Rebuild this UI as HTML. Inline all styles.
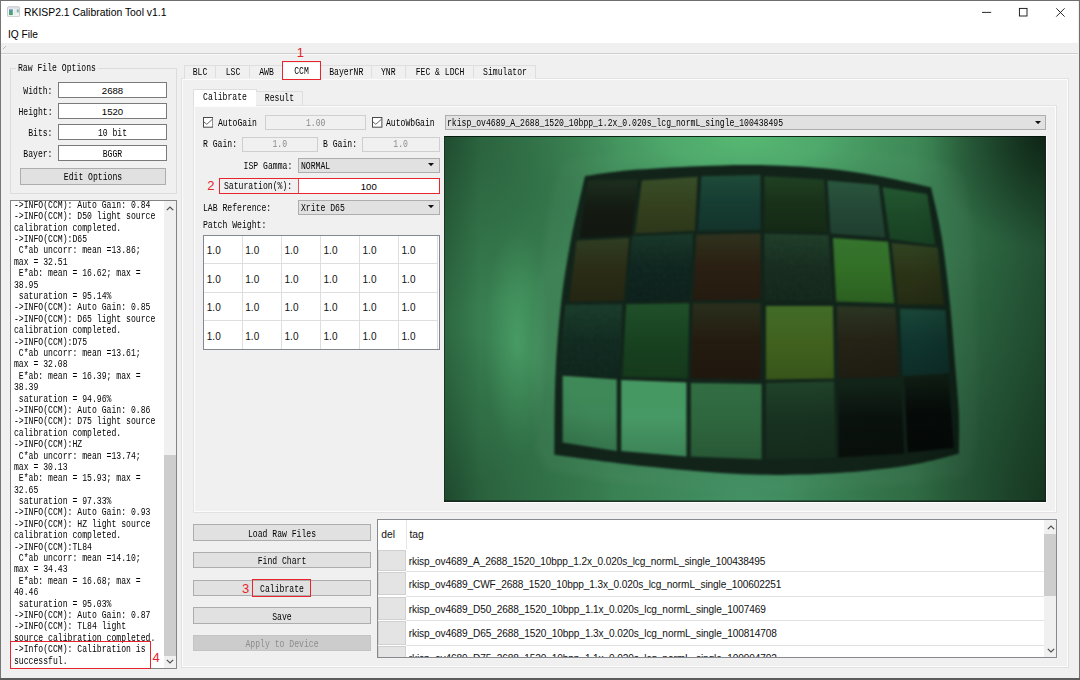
<!DOCTYPE html>
<html lang="en"><head><meta charset="utf-8"><title>RKISP2.1 Calibration Tool v1.1</title>
<style>
*{box-sizing:border-box;margin:0;padding:0}
html,body{width:1080px;height:680px;overflow:hidden}
body{position:relative;background:#f0f0f0;font-family:"Liberation Sans",sans-serif;color:#000;font-size:10px}
.a{position:absolute}
.m{font-family:"Liberation Mono","DejaVu Sans Mono",monospace;font-size:10.5px;line-height:12px;white-space:pre;display:block;transform:scaleX(.773);transform-origin:0 50%;color:#000;position:relative;top:1px}
.mc{transform-origin:50% 50%;text-align:center;left:0;right:0}
.mr{transform-origin:100% 50%;text-align:right}
.btn{background:#e1e1e1;border:1px solid #adadad}
.inp{background:#fff;border:1px solid #7a7a7a}
.dis{background:#f0f0f0;border:1px solid #cfcfcf}
.cmb{background:#e1e1e1;border:1px solid #adadad}
.s{font-family:"Liberation Sans",sans-serif;white-space:pre}
.red{border:1.9px solid #e8242c}
.rn{color:#e6232b;font-family:"Liberation Sans",sans-serif;font-size:13px;line-height:13px}
</style></head><body>
<!-- window frame strips -->
<div class="a" style="left:0;top:0;width:1080px;height:1px;background:#6e6e6e"></div>
<div class="a" style="left:0;top:0;width:1.2px;height:680px;background:#767676"></div>
<div class="a" style="left:1078.8px;top:0;width:1.2px;height:680px;background:#707070"></div>
<div class="a" style="left:0;top:678.3px;width:1080px;height:1.7px;background:#5c5c5c"></div>
<!-- title + menu -->
<div class="a" style="left:1.4px;top:1px;width:1077.1px;height:42.2px;background:#fff"></div>
<svg class="a" style="left:7px;top:6px" width="13" height="11.4" viewBox="0 0 13 11.4"><defs><linearGradient id="ig" x1="0" y1="0" x2=".6" y2="1"><stop offset="0" stop-color="#6a8fc4"/><stop offset="1" stop-color="#44a75c"/></linearGradient></defs><rect x=".5" y=".7" width="12" height="10" rx="1" fill="#f2f4f6" stroke="#c6cacf"/><rect x="1" y="1.2" width="11" height="1.3" fill="#d3d7dc"/><rect x="2" y="3.3" width="3.8" height="5.8" fill="url(#ig)"/><rect x="9.8" y="3.3" width="1.9" height="3.2" fill="url(#ig)" opacity=".75"/><rect x="7.3" y="3.3" width="1.2" height="5.8" fill="#e3e5e8"/></svg>
<div class="a s" id="ttl" style="left:24px;top:6.5px;font-size:10.4px;line-height:12px;letter-spacing:0">RKISP2.1 Calibration Tool v1.1</div>
<div class="a s" id="mnu" style="left:8px;top:29.2px;font-size:10.2px;line-height:12px">IQ File</div>
<svg class="a" style="left:975px;top:5px" width="96" height="16" viewBox="0 0 96 16"><g stroke="#111" stroke-width="0.9" fill="none"><path d="M7 7.4H16.2"/><rect x="44.4" y="3.4" width="7.6" height="7.6"/><path d="M81.3 3.3L89.6 11.6M89.6 3.3L81.3 11.6"/></g></svg>
<div class="a" style="left:1.4px;top:52.8px;width:1077px;height:1px;background:#cfcfcf"></div>
<div class="a" style="left:1.4px;top:53.8px;width:1077px;height:1px;background:#f8f8f8"></div>
<svg class="a" style="left:3px;top:46px" width="4" height="4" viewBox="0 0 4 4"><path d="M0 3L3 0" stroke="#aaa" stroke-width=".8"/></svg>

<!-- Raw File Options group -->
<div class="a" style="left:10px;top:68px;width:167px;height:126px;border:1px solid #dcdcdc"></div>
<div class="a" style="left:16px;top:61px;width:82px;height:13px;background:#f0f0f0"></div>
<div class="a" style="left:18px;top:60.8px;width:120px"><span class="m">Raw File Options</span></div>

<div class="a" style="left:0;top:84px;width:52.5px"><span class="m mr">Width:</span></div>
<div class="a inp" style="left:58px;top:82px;width:109px;height:16.4px"></div>
<div class="a s" style="left:58px;top:84.9px;width:109px;text-align:center;font-size:9.6px;line-height:12px">2688</div>

<div class="a" style="left:0;top:105px;width:52.5px"><span class="m mr">Height:</span></div>
<div class="a inp" style="left:58px;top:103px;width:109px;height:16.4px"></div>
<div class="a s" style="left:58px;top:105.9px;width:109px;text-align:center;font-size:9.6px;line-height:12px">1520</div>

<div class="a" style="left:0;top:126px;width:52.5px"><span class="m mr">Bits:</span></div>
<div class="a inp" style="left:58px;top:124px;width:109px;height:16.4px"></div>
<div class="a" style="left:58px;top:126.2px;width:109px"><span class="m mc">10 bit</span></div>

<div class="a" style="left:0;top:147px;width:52.5px"><span class="m mr">Bayer:</span></div>
<div class="a inp" style="left:58px;top:145px;width:109px;height:16.4px"></div>
<div class="a" style="left:58px;top:147.2px;width:109px"><span class="m mc">BGGR</span></div>

<div class="a btn" style="left:20px;top:168px;width:146px;height:16.6px"></div>
<div class="a" style="left:20px;top:170.3px;width:146px"><span class="m mc">Edit Options</span></div>

<!-- log box -->
<div class="a" id="log" style="left:10px;top:200.3px;width:167px;height:468.4px;background:#fff;border:1px solid #848484;overflow:hidden">
<div class="a" style="left:2.7px;top:-2.4px;width:200px;line-height:11.4px" id="loglines">
<span class="m" style="line-height:11.4px;height:11.4px">-&gt;INFO(CCM): Auto Gain: 0.84</span>
<span class="m" style="line-height:11.4px;height:11.4px">-&gt;INFO(CCM): D50 light source</span>
<span class="m" style="line-height:11.4px;height:11.4px">calibration completed.</span>
<span class="m" style="line-height:11.4px;height:11.4px">-&gt;INFO(CCM):D65</span>
<span class="m" style="line-height:11.4px;height:11.4px"> C*ab uncorr: mean =13.86;</span>
<span class="m" style="line-height:11.4px;height:11.4px">max = 32.51</span>
<span class="m" style="line-height:11.4px;height:11.4px"> E*ab: mean = 16.62; max =</span>
<span class="m" style="line-height:11.4px;height:11.4px">38.95</span>
<span class="m" style="line-height:11.4px;height:11.4px"> saturation = 95.14%</span>
<span class="m" style="line-height:11.4px;height:11.4px">-&gt;INFO(CCM): Auto Gain: 0.85</span>
<span class="m" style="line-height:11.4px;height:11.4px">-&gt;INFO(CCM): D65 light source</span>
<span class="m" style="line-height:11.4px;height:11.4px">calibration completed.</span>
<span class="m" style="line-height:11.4px;height:11.4px">-&gt;INFO(CCM):D75</span>
<span class="m" style="line-height:11.4px;height:11.4px"> C*ab uncorr: mean =13.61;</span>
<span class="m" style="line-height:11.4px;height:11.4px">max = 32.08</span>
<span class="m" style="line-height:11.4px;height:11.4px"> E*ab: mean = 16.39; max =</span>
<span class="m" style="line-height:11.4px;height:11.4px">38.39</span>
<span class="m" style="line-height:11.4px;height:11.4px"> saturation = 94.96%</span>
<span class="m" style="line-height:11.4px;height:11.4px">-&gt;INFO(CCM): Auto Gain: 0.86</span>
<span class="m" style="line-height:11.4px;height:11.4px">-&gt;INFO(CCM): D75 light source</span>
<span class="m" style="line-height:11.4px;height:11.4px">calibration completed.</span>
<span class="m" style="line-height:11.4px;height:11.4px">-&gt;INFO(CCM):HZ</span>
<span class="m" style="line-height:11.4px;height:11.4px"> C*ab uncorr: mean =13.74;</span>
<span class="m" style="line-height:11.4px;height:11.4px">max = 30.13</span>
<span class="m" style="line-height:11.4px;height:11.4px"> E*ab: mean = 15.93; max =</span>
<span class="m" style="line-height:11.4px;height:11.4px">32.65</span>
<span class="m" style="line-height:11.4px;height:11.4px"> saturation = 97.33%</span>
<span class="m" style="line-height:11.4px;height:11.4px">-&gt;INFO(CCM): Auto Gain: 0.93</span>
<span class="m" style="line-height:11.4px;height:11.4px">-&gt;INFO(CCM): HZ light source</span>
<span class="m" style="line-height:11.4px;height:11.4px">calibration completed.</span>
<span class="m" style="line-height:11.4px;height:11.4px">-&gt;INFO(CCM):TL84</span>
<span class="m" style="line-height:11.4px;height:11.4px"> C*ab uncorr: mean =14.10;</span>
<span class="m" style="line-height:11.4px;height:11.4px">max = 34.43</span>
<span class="m" style="line-height:11.4px;height:11.4px"> E*ab: mean = 16.68; max =</span>
<span class="m" style="line-height:11.4px;height:11.4px">40.46</span>
<span class="m" style="line-height:11.4px;height:11.4px"> saturation = 95.03%</span>
<span class="m" style="line-height:11.4px;height:11.4px">-&gt;INFO(CCM): Auto Gain: 0.87</span>
<span class="m" style="line-height:11.4px;height:11.4px">-&gt;INFO(CCM): TL84 light</span>
<span class="m" style="line-height:11.4px;height:11.4px">source calibration completed.</span>
<span class="m" style="line-height:11.4px;height:11.4px">-&gt;Info(CCM): Calibration is</span>
<span class="m" style="line-height:11.4px;height:11.4px">successful.</span>
</div>
<div class="a" style="left:153.2px;top:0;width:12px;height:466.4px;background:#f0f0f0"></div>
<div class="a" style="left:153.2px;top:254.2px;width:12px;height:200.5px;background:#cdcdcd"></div>
<svg class="a" style="left:155.2px;top:4.5px" width="8" height="5" viewBox="0 0 8 5"><path d="M.8 4.2L4 1L7.2 4.2" fill="none" stroke="#505050" stroke-width="1.2"/></svg>
<svg class="a" style="left:155.2px;top:458px" width="8" height="5" viewBox="0 0 8 5"><path d="M.8 .8L4 4L7.2 .8" fill="none" stroke="#505050" stroke-width="1.2"/></svg>
</div>
<div class="a red" style="left:10px;top:641px;width:141px;height:27.8px"></div>
<div class="a rn" style="left:152.5px;top:651px">4</div>
<!-- outer pane -->
<div class="a" style="left:181.4px;top:78.2px;width:887.4px;height:589.4px;border:1px solid #e2e2e2;box-shadow:inset 0 0 0 1px #fcfcfc;background:#f0f0f0"></div>
<!-- outer tabs -->
<div class="a" style="left:183.5px;top:65px;width:352px;height:13.5px;border:1px solid #dedede;border-bottom:none;background:#f0f0f0"></div>
<div class="a" style="left:215.3px;top:65px;width:1px;height:13px;background:#dedede"></div>
<div class="a" style="left:249.3px;top:65px;width:1px;height:13px;background:#dedede"></div>
<div class="a" style="left:370.8px;top:65px;width:1px;height:13px;background:#dedede"></div>
<div class="a" style="left:405.2px;top:65px;width:1px;height:13px;background:#dedede"></div>
<div class="a" style="left:473.4px;top:65px;width:1px;height:13px;background:#dedede"></div>
<div class="a" style="left:283px;top:62.5px;width:37px;height:17px;background:#fff"></div>
<div class="a" style="left:183.5px;top:64.9px;width:32px"><span class="m mc">BLC</span></div>
<div class="a" style="left:215.5px;top:64.9px;width:34px"><span class="m mc">LSC</span></div>
<div class="a" style="left:249.5px;top:64.9px;width:33px"><span class="m mc">AWB</span></div>
<div class="a" style="left:283px;top:64.2px;width:37px"><span class="m mc">CCM</span></div>
<div class="a" style="left:320.5px;top:64.9px;width:50.5px"><span class="m mc">BayerNR</span></div>
<div class="a" style="left:371px;top:64.9px;width:34.5px"><span class="m mc">YNR</span></div>
<div class="a" style="left:405.5px;top:64.9px;width:68px"><span class="m mc">FEC &amp; LDCH</span></div>
<div class="a" style="left:473.7px;top:64.9px;width:62px"><span class="m mc">Simulator</span></div>
<div class="a red" style="left:282.3px;top:60.8px;width:38.6px;height:19.6px"></div>
<div class="a rn" style="left:296.8px;top:45.5px">1</div>

<!-- inner pane -->
<div class="a" style="left:192.5px;top:104.6px;width:864.2px;height:408px;border:1px solid #e2e2e2;box-shadow:inset 0 0 0 1px #fcfcfc;background:#f0f0f0"></div>
<div class="a" style="left:192.5px;top:88.6px;width:64px;height:17px;border:1px solid #dedede;border-bottom:none;background:#fff"></div>
<div class="a" style="left:256px;top:90.5px;width:46.8px;height:14.5px;border:1px solid #dedede;border-left:none;border-bottom:none;background:#f0f0f0"></div>
<div class="a" style="left:192.5px;top:90.2px;width:64px"><span class="m mc">Calibrate</span></div>
<div class="a" style="left:256px;top:91.2px;width:46.8px"><span class="m mc">Result</span></div>

<!-- row 1: AutoGain -->
<svg class="a" style="left:202.7px;top:117.1px" width="10.4" height="10.7" viewBox="0 0 10.4 10.7"><rect x=".5" y=".5" width="9.4" height="9.7" fill="#fff" stroke="#4a4a4a"/><path d="M.9 4.9L3.8 7.3L9.6 2.1" fill="none" stroke="#5a5a5a" stroke-width=".95"/></svg>
<div class="a" style="left:217.5px;top:116px;width:60px"><span class="m">AutoGain</span></div>
<div class="a dis" style="left:265px;top:115.3px;width:101.4px;height:15px"></div>
<div class="a" style="left:265px;top:116px;width:101.4px"><span class="m mc" style="color:#8a8a8a">1.00</span></div>
<svg class="a" style="left:372.2px;top:117.1px" width="10.4" height="10.7" viewBox="0 0 10.4 10.7"><rect x=".5" y=".5" width="9.4" height="9.7" fill="#fff" stroke="#4a4a4a"/><path d="M.9 4.9L3.8 7.3L9.6 2.1" fill="none" stroke="#5a5a5a" stroke-width=".95"/></svg>
<div class="a" style="left:386.3px;top:116px;width:60px"><span class="m">AutoWbGain</span></div>
<div class="a cmb" style="left:444.5px;top:114.8px;width:601.7px;height:15.6px"></div>
<div class="a" style="left:447px;top:116px;width:500px"><span class="m">rkisp_ov4689_A_2688_1520_10bpp_1.2x_0.020s_lcg_normL_single_100438495</span></div>
<svg class="a" style="left:1034.5px;top:120.5px" width="6" height="3.2" viewBox="0 0 6 3.2"><path d="M0 0H6L3 3.2Z" fill="#111"/></svg>

<!-- row 2: R/B gain -->
<div class="a" style="left:202.5px;top:137.4px;width:60px"><span class="m">R Gain:</span></div>
<div class="a dis" style="left:242px;top:137px;width:75.6px;height:14.6px"></div>
<div class="a" style="left:242px;top:137.4px;width:75.6px"><span class="m mc" style="color:#8a8a8a">1.0</span></div>
<div class="a" style="left:323px;top:137.4px;width:60px"><span class="m">B Gain:</span></div>
<div class="a dis" style="left:362.4px;top:137px;width:77.2px;height:14.6px"></div>
<div class="a" style="left:362.4px;top:137.4px;width:77.2px"><span class="m mc" style="color:#8a8a8a">1.0</span></div>

<!-- row 3: ISP Gamma -->
<div class="a" style="left:192px;top:158.6px;width:100.3px"><span class="m mr">ISP Gamma:</span></div>
<div class="a cmb" style="left:298px;top:157.8px;width:141.6px;height:15px"></div>
<div class="a" style="left:300.5px;top:158.6px;width:100px"><span class="m">NORMAL</span></div>
<svg class="a" style="left:427.8px;top:163.3px" width="6" height="3.2" viewBox="0 0 6 3.2"><path d="M0 0H6L3 3.2Z" fill="#111"/></svg>

<!-- row 4: Saturation -->
<div class="a" style="left:298px;top:178.6px;width:141.6px;height:15px;background:#fff"></div>
<div class="a red" style="left:218.6px;top:177.6px;width:221.8px;height:16.8px"></div>
<div class="a" style="left:297.6px;top:178.5px;width:1.2px;height:15px;background:#e6232b;opacity:.8"></div>
<div class="a" style="left:224px;top:179.2px;width:80px"><span class="m">Saturation(%):</span></div>
<div class="a s" style="left:298px;top:180.9px;width:141.6px;text-align:center;font-size:9.6px;line-height:12px">100</div>
<div class="a rn" style="left:207.3px;top:179.4px">2</div>

<!-- row 5: LAB reference -->
<div class="a" style="left:202.5px;top:200.6px;width:100px"><span class="m">LAB Reference:</span></div>
<div class="a cmb" style="left:298px;top:199.6px;width:141.6px;height:15.4px"></div>
<div class="a" style="left:300.5px;top:200.6px;width:100px"><span class="m">Xrite D65</span></div>
<svg class="a" style="left:427.8px;top:205.3px" width="6" height="3.2" viewBox="0 0 6 3.2"><path d="M0 0H6L3 3.2Z" fill="#111"/></svg>
<div class="a" style="left:202.5px;top:218.3px;width:100px"><span class="m">Patch Weight:</span></div>

<!-- patch weight table -->
<div class="a" id="pw" style="left:202.5px;top:235px;width:237.2px;height:114.6px;background:#fff;border:1px solid #828790"></div>
<div class="a" style="left:241.50px;top:236px;width:1px;height:112.6px;background:#dedede"></div>
<div class="a" style="left:280.75px;top:236px;width:1px;height:112.6px;background:#dedede"></div>
<div class="a" style="left:319.75px;top:236px;width:1px;height:112.6px;background:#dedede"></div>
<div class="a" style="left:358.75px;top:236px;width:1px;height:112.6px;background:#dedede"></div>
<div class="a" style="left:397.75px;top:236px;width:1px;height:112.6px;background:#dedede"></div>
<div class="a" style="left:437.00px;top:236px;width:1px;height:112.6px;background:#dedede"></div>
<div class="a" style="left:203.5px;top:263.25px;width:234.5px;height:1px;background:#dedede"></div>
<div class="a" style="left:203.5px;top:291.75px;width:234.5px;height:1px;background:#dedede"></div>
<div class="a" style="left:203.5px;top:320.25px;width:234.5px;height:1px;background:#dedede"></div>
<div class="a s" style="left:206.80px;top:245.40px;font-size:10px;line-height:12px;color:#111">1.0</div>
<div class="a s" style="left:245.30px;top:245.40px;font-size:10px;line-height:12px;color:#111">1.0</div>
<div class="a s" style="left:284.55px;top:245.40px;font-size:10px;line-height:12px;color:#111">1.0</div>
<div class="a s" style="left:323.55px;top:245.40px;font-size:10px;line-height:12px;color:#111">1.0</div>
<div class="a s" style="left:362.55px;top:245.40px;font-size:10px;line-height:12px;color:#111">1.0</div>
<div class="a s" style="left:401.55px;top:245.40px;font-size:10px;line-height:12px;color:#111">1.0</div>
<div class="a s" style="left:206.80px;top:273.65px;font-size:10px;line-height:12px;color:#111">1.0</div>
<div class="a s" style="left:245.30px;top:273.65px;font-size:10px;line-height:12px;color:#111">1.0</div>
<div class="a s" style="left:284.55px;top:273.65px;font-size:10px;line-height:12px;color:#111">1.0</div>
<div class="a s" style="left:323.55px;top:273.65px;font-size:10px;line-height:12px;color:#111">1.0</div>
<div class="a s" style="left:362.55px;top:273.65px;font-size:10px;line-height:12px;color:#111">1.0</div>
<div class="a s" style="left:401.55px;top:273.65px;font-size:10px;line-height:12px;color:#111">1.0</div>
<div class="a s" style="left:206.80px;top:302.15px;font-size:10px;line-height:12px;color:#111">1.0</div>
<div class="a s" style="left:245.30px;top:302.15px;font-size:10px;line-height:12px;color:#111">1.0</div>
<div class="a s" style="left:284.55px;top:302.15px;font-size:10px;line-height:12px;color:#111">1.0</div>
<div class="a s" style="left:323.55px;top:302.15px;font-size:10px;line-height:12px;color:#111">1.0</div>
<div class="a s" style="left:362.55px;top:302.15px;font-size:10px;line-height:12px;color:#111">1.0</div>
<div class="a s" style="left:401.55px;top:302.15px;font-size:10px;line-height:12px;color:#111">1.0</div>
<div class="a s" style="left:206.80px;top:330.65px;font-size:10px;line-height:12px;color:#111">1.0</div>
<div class="a s" style="left:245.30px;top:330.65px;font-size:10px;line-height:12px;color:#111">1.0</div>
<div class="a s" style="left:284.55px;top:330.65px;font-size:10px;line-height:12px;color:#111">1.0</div>
<div class="a s" style="left:323.55px;top:330.65px;font-size:10px;line-height:12px;color:#111">1.0</div>
<div class="a s" style="left:362.55px;top:330.65px;font-size:10px;line-height:12px;color:#111">1.0</div>
<div class="a s" style="left:401.55px;top:330.65px;font-size:10px;line-height:12px;color:#111">1.0</div>

<!-- photo -->
<div class="a" style="left:444.2px;top:136.1px;width:603px;height:366.8px;background:#fff"></div>
<div class="a" style="left:444.2px;top:136.1px;width:601.8px;height:365.6px;background:#1b3a28;overflow:hidden">
<svg class="a" style="left:0;top:0" width="601.8" height="365.6" viewBox="0 0 601 365" preserveAspectRatio="none">
<defs>
<radialGradient id="topl" cx="300" cy="0" r="270" gradientUnits="userSpaceOnUse" gradientTransform="scale(1,.4)">
<stop offset="0" stop-color="#58bc74" stop-opacity=".95"/><stop offset=".3" stop-color="#54b472" stop-opacity=".78"/><stop offset=".55" stop-color="#4aa066" stop-opacity=".5"/><stop offset=".8" stop-color="#42905a" stop-opacity=".2"/><stop offset="1" stop-color="#387e50" stop-opacity="0"/></radialGradient>
<radialGradient id="lobe" cx="73" cy="205" r="115" gradientUnits="userSpaceOnUse" gradientTransform="translate(73,0) scale(.28,1) translate(-73,0)">
<stop offset="0" stop-color="#489c64" stop-opacity=".95"/><stop offset=".45" stop-color="#489c64" stop-opacity=".55"/><stop offset="1" stop-color="#489c64" stop-opacity="0"/></radialGradient>
<linearGradient id="rs" x1="470" y1="0" x2="601" y2="0" gradientUnits="userSpaceOnUse"><stop offset="0" stop-color="#031008" stop-opacity="0"/><stop offset=".38" stop-color="#031008" stop-opacity=".17"/><stop offset=".7" stop-color="#031008" stop-opacity=".29"/><stop offset="1" stop-color="#031008" stop-opacity=".42"/></linearGradient>
<radialGradient id="tl" cx="0" cy="0" r="175" gradientUnits="userSpaceOnUse"><stop offset="0" stop-color="#04140a" stop-opacity=".32"/><stop offset=".5" stop-color="#04140a" stop-opacity=".15"/><stop offset="1" stop-color="#04140a" stop-opacity="0"/></radialGradient>
<radialGradient id="bl" cx="0" cy="365" r="170" gradientUnits="userSpaceOnUse"><stop offset="0" stop-color="#04140a" stop-opacity=".36"/><stop offset=".5" stop-color="#04140a" stop-opacity=".16"/><stop offset="1" stop-color="#04140a" stop-opacity="0"/></radialGradient>
<radialGradient id="trc" cx="601" cy="0" r="115" gradientUnits="userSpaceOnUse"><stop offset="0" stop-color="#020a05" stop-opacity=".62"/><stop offset=".5" stop-color="#020a05" stop-opacity=".3"/><stop offset="1" stop-color="#020a05" stop-opacity="0"/></radialGradient>
<radialGradient id="brc" cx="601" cy="365" r="260" gradientUnits="userSpaceOnUse"><stop offset="0" stop-color="#020a05" stop-opacity=".36"/><stop offset=".3" stop-color="#020a05" stop-opacity=".25"/><stop offset=".6" stop-color="#020a05" stop-opacity=".12"/><stop offset="1" stop-color="#020a05" stop-opacity="0"/></radialGradient>
<linearGradient id="le" x1="0" y1="0" x2="36" y2="0" gradientUnits="userSpaceOnUse"><stop offset="0" stop-color="#04140a" stop-opacity=".22"/><stop offset="1" stop-color="#04140a" stop-opacity="0"/></linearGradient>
<radialGradient id="botg" cx="300" cy="365" r="150" gradientUnits="userSpaceOnUse" gradientTransform="translate(0,365) scale(1,.5) translate(0,-365)"><stop offset="0" stop-color="#46966a" stop-opacity=".8"/><stop offset=".5" stop-color="#46966a" stop-opacity=".4"/><stop offset="1" stop-color="#46966a" stop-opacity="0"/></radialGradient>
<filter id="nz" color-interpolation-filters="sRGB" x="0" y="0" width="100%" height="100%"><feTurbulence type="fractalNoise" baseFrequency="0.85" numOctaves="2" seed="7" result="t"/><feColorMatrix in="t" type="matrix" values="0 0 0 0 .35  0 0 0 0 .6  0 0 0 0 .5  0 0 0 2.2 -1.05" result="n"/><feComposite in="n" in2="SourceGraphic" operator="in"/></filter>
<linearGradient id="pg" x1="0" y1="0" x2="0" y2="1"><stop offset="0" stop-color="#4a9a5e" stop-opacity=".16"/><stop offset=".5" stop-color="#4a9a5e" stop-opacity="0"/><stop offset=".5" stop-color="#000" stop-opacity="0"/><stop offset="1" stop-color="#000" stop-opacity=".14"/></linearGradient>
<filter id="b1" color-interpolation-filters="sRGB" x="-5%" y="-5%" width="110%" height="110%"><feGaussianBlur stdDeviation="0.8"/></filter>
<filter id="b6" color-interpolation-filters="sRGB" x="-10%" y="-10%" width="120%" height="120%"><feGaussianBlur stdDeviation="3"/></filter>
</defs>
<rect width="601" height="365" fill="#387e50"/>
<rect width="601" height="365" fill="url(#lobe)"/>
<polygon points="119.6,25.0 183.6,15.6 311.6,8.3 422.9,13.9 500.8,26.7 520.3,41.7 528.7,111.3 533.1,233.7 531.4,311.6 523.1,339.5 445.2,349.5 311.6,356.1 183.6,347.8 102.9,333.9 91.8,311.6 89.0,222.6 95.7,139.1 108.5,55.6" fill="#fff" opacity=".03" filter="url(#b6)"/>
<rect width="601" height="140" fill="url(#topl)"/>
<rect y="280" width="601" height="85" fill="url(#botg)"/>
<rect width="36" height="365" fill="url(#le)"/>
<g filter="url(#b1)">
<path d="M140.8 40.1C145.1 39.4 157.9 37.3 166.9 36.2C175.9 35.1 180.4 34.4 194.8 33.4C209.1 32.4 233.7 30.8 253.2 30.1C272.7 29.3 290.8 28.6 311.6 28.9C332.5 29.3 358.0 30.4 378.4 32.3C398.8 34.1 416.1 36.9 434.1 40.1C452.0 43.2 477.6 49.3 486.4 51.2C488.1 59.4 493.8 80.9 496.9 100.2C500.1 119.5 503.0 144.7 505.3 166.9C507.6 189.2 509.4 215.2 510.9 233.7C512.3 252.3 513.6 264.3 514.2 278.2C514.7 292.2 514.2 310.7 514.2 317.2C507.3 318.9 486.4 324.6 473.0 327.2C459.7 329.8 448.0 331.2 434.1 332.8C420.1 334.4 409.0 335.7 389.5 336.7C370.1 337.6 341.3 338.8 317.2 338.3C293.1 337.9 268.0 335.7 244.9 333.9C221.7 332.0 200.5 329.8 178.1 327.2C155.6 324.6 121.5 319.8 110.2 318.3C110.4 305.1 110.2 264.5 111.3 239.3C112.4 214.1 114.3 189.7 116.9 166.9C119.5 144.2 122.9 124.1 126.9 102.9C130.9 81.8 138.5 50.5 140.8 40.1Z" fill="#12241a"/>
<polygon points="143.6,44.5 193.7,43.4 187.5,99.1 135.2,101.8" fill="#141a12"/>
<polygon points="197.6,44.5 253.2,40.6 250.4,94.6 190.9,97.4" fill="#34401e"/>
<polygon points="257.1,40.1 316.1,39.0 316.1,93.5 253.8,94.6" fill="#163c32"/>
<polygon points="320.0,40.1 379.5,43.4 382.9,95.7 320.0,94.6" fill="#183018"/>
<polygon points="382.9,44.5 434.1,49.0 440.7,101.3 386.2,97.4" fill="#244836"/>
<polygon points="438.0,51.2 482.5,57.9 490.8,109.1 445.2,102.9" fill="#1c4a28"/>
<polygon points="132.4,104.6 184.8,101.8 179.2,164.2 125.2,165.3" fill="#2a2c16"/>
<polygon points="188.1,100.2 248.7,97.4 245.4,164.2 182.0,165.3" fill="#0e221d"/>
<polygon points="252.1,98.5 316.1,97.4 316.1,163.0 248.7,164.2" fill="#2a1f12"/>
<polygon points="320.0,97.4 384.0,99.1 388.4,165.3 320.0,164.2" fill="#162a1d"/>
<polygon points="388.4,101.8 443.5,105.7 449.6,166.9 391.8,165.3" fill="#326e26"/>
<polygon points="446.9,106.8 493.0,111.3 499.2,168.6 453.5,168.1" fill="#2b3316"/>
<polygon points="121.3,168.6 178.1,168.1 175.3,240.4 114.1,238.2" fill="#10281f"/>
<polygon points="182.0,168.1 244.9,166.9 243.2,242.1 178.1,240.4" fill="#184220"/>
<polygon points="248.7,166.9 316.1,166.9 316.1,243.2 246.5,242.1" fill="#241b10"/>
<polygon points="321.6,169.7 388.4,169.7 389.5,242.1 321.6,243.2" fill="#40621e"/>
<polygon points="392.3,169.7 450.8,171.4 454.6,240.4 394.0,242.1" fill="#252216"/>
<polygon points="455.2,172.5 500.8,173.6 504.7,236.5 458.0,239.3" fill="#113832"/>
<polygon points="118.5,239.3 172.5,243.2 172.5,314.4 118.5,306.1" fill="#3e8758"/>
<polygon points="177.0,243.7 242.1,246.0 242.1,320.0 177.0,314.4" fill="#469864"/>
<polygon points="246.5,246.5 317.2,247.6 317.2,322.8 246.5,320.0" fill="#2e663e"/>
<polygon points="321.6,246.5 389.5,244.9 391.2,321.6 321.6,322.8" fill="#183220"/>
<polygon points="394.0,244.9 456.3,242.1 459.7,317.2 394.0,321.1" fill="#0a120e"/>
<polygon points="459.7,241.0 503.6,238.2 509.2,311.6 463.0,316.1" fill="#060908"/>
<polygon points="143.6,44.5 193.7,43.4 187.5,99.1 135.2,101.8" fill="url(#pg)"/>
<polygon points="197.6,44.5 253.2,40.6 250.4,94.6 190.9,97.4" fill="url(#pg)"/>
<polygon points="257.1,40.1 316.1,39.0 316.1,93.5 253.8,94.6" fill="url(#pg)"/>
<polygon points="320.0,40.1 379.5,43.4 382.9,95.7 320.0,94.6" fill="url(#pg)"/>
<polygon points="382.9,44.5 434.1,49.0 440.7,101.3 386.2,97.4" fill="url(#pg)"/>
<polygon points="438.0,51.2 482.5,57.9 490.8,109.1 445.2,102.9" fill="url(#pg)"/>
<polygon points="132.4,104.6 184.8,101.8 179.2,164.2 125.2,165.3" fill="url(#pg)"/>
<polygon points="188.1,100.2 248.7,97.4 245.4,164.2 182.0,165.3" fill="url(#pg)"/>
<polygon points="252.1,98.5 316.1,97.4 316.1,163.0 248.7,164.2" fill="url(#pg)"/>
<polygon points="320.0,97.4 384.0,99.1 388.4,165.3 320.0,164.2" fill="url(#pg)"/>
<polygon points="388.4,101.8 443.5,105.7 449.6,166.9 391.8,165.3" fill="url(#pg)"/>
<polygon points="446.9,106.8 493.0,111.3 499.2,168.6 453.5,168.1" fill="url(#pg)"/>
<polygon points="121.3,168.6 178.1,168.1 175.3,240.4 114.1,238.2" fill="url(#pg)"/>
<polygon points="182.0,168.1 244.9,166.9 243.2,242.1 178.1,240.4" fill="url(#pg)"/>
<polygon points="248.7,166.9 316.1,166.9 316.1,243.2 246.5,242.1" fill="url(#pg)"/>
<polygon points="321.6,169.7 388.4,169.7 389.5,242.1 321.6,243.2" fill="url(#pg)"/>
<polygon points="392.3,169.7 450.8,171.4 454.6,240.4 394.0,242.1" fill="url(#pg)"/>
<polygon points="455.2,172.5 500.8,173.6 504.7,236.5 458.0,239.3" fill="url(#pg)"/>
<polygon points="118.5,239.3 172.5,243.2 172.5,314.4 118.5,306.1" fill="url(#pg)"/>
<polygon points="177.0,243.7 242.1,246.0 242.1,320.0 177.0,314.4" fill="url(#pg)"/>
<polygon points="246.5,246.5 317.2,247.6 317.2,322.8 246.5,320.0" fill="url(#pg)"/>
<polygon points="321.6,246.5 389.5,244.9 391.2,321.6 321.6,322.8" fill="url(#pg)"/>
<polygon points="394.0,244.9 456.3,242.1 459.7,317.2 394.0,321.1" fill="url(#pg)"/>
<polygon points="459.7,241.0 503.6,238.2 509.2,311.6 463.0,316.1" fill="url(#pg)"/>
<polygon points="188.1,100.2 248.7,97.4 245.4,164.2 182.0,165.3" fill="#fff" filter="url(#nz)" opacity=".22"/>
<polygon points="320.0,97.4 384.0,99.1 388.4,165.3 320.0,164.2" fill="#fff" filter="url(#nz)" opacity=".22"/>
<polygon points="121.3,168.6 178.1,168.1 175.3,240.4 114.1,238.2" fill="#fff" filter="url(#nz)" opacity=".22"/>
</g>
<rect x="470" width="131" height="365" fill="url(#rs)"/>
<rect width="180" height="180" fill="url(#tl)"/>
<rect y="190" width="180" height="175" fill="url(#bl)"/>
<rect x="480" width="121" height="120" fill="url(#trc)"/>
<rect x="330" y="100" width="271" height="265" fill="url(#brc)"/>
<rect x="0" y="0" width="601" height="1" fill="#04120a" opacity=".85"/>
<rect x="0" y="0" width="1" height="365" fill="#1c2a22" opacity=".8"/>
<rect x="600" y="0" width="1" height="365" fill="#1e201f"/>
<rect x="0" y="364" width="601" height="1" fill="#0c100e"/>
</svg>
</div>
<!-- buttons -->
<div class="a btn" style="left:193px;top:524.4px;width:178px;height:16.4px"></div>
<div class="a" style="left:193px;top:526.6px;width:178px"><span class="m mc">Load Raw Files</span></div>
<div class="a btn" style="left:193px;top:552px;width:178px;height:16.4px"></div>
<div class="a" style="left:193px;top:554.2px;width:178px"><span class="m mc">Find Chart</span></div>
<div class="a btn" style="left:193px;top:579.5px;width:178px;height:16.4px"></div>
<div class="a" style="left:193px;top:581.8px;width:178px"><span class="m mc">Calibrate</span></div>
<div class="a red" style="left:252.4px;top:578.6px;width:58.6px;height:18.4px"></div>
<div class="a rn" style="left:242px;top:581.8px">3</div>
<div class="a btn" style="left:193px;top:607.4px;width:178px;height:16.4px"></div>
<div class="a" style="left:193px;top:609.6px;width:178px"><span class="m mc">Save</span></div>
<div class="a" style="left:193px;top:634.6px;width:178px;height:16.6px;background:#cccccc;border:1px solid #c4c4c4"></div>
<div class="a" style="left:193px;top:637px;width:178px"><span class="m mc" style="color:#8c8c8c">Apply to Device</span></div>

<!-- file table -->
<div class="a" id="ft" style="left:377px;top:519.4px;width:680.4px;height:138.2px;background:#fff;border:1px solid #868a90;overflow:hidden">
 <div class="a" style="left:27.6px;top:0;width:1px;height:29px;background:#e5e5e5"></div>
 <div class="a s" style="left:3.2px;top:9px;font-size:10.3px;line-height:12px;color:#111">del</div>
 <div class="a s" style="left:31.4px;top:9px;font-size:10.3px;line-height:12px;color:#111">tag</div>
 <div class="a" style="left:0;top:29.40px;width:27.6px;height:21.20px;background:#e4e4e4;border:1px solid #d0d0d0"></div>
<div class="a" style="left:28px;top:50.90px;width:638px;height:1px;background:#e2e2e2"></div>
<div class="a s ftr" style="left:30.7px;top:35.50px;font-size:10.1px;letter-spacing:-.103px;line-height:12px;color:#111">rkisp_ov4689_A_2688_1520_10bpp_1.2x_0.020s_lcg_normL_single_100438495</div>
<div class="a" style="left:0;top:52.00px;width:27.6px;height:23.10px;background:#e4e4e4;border:1px solid #d0d0d0"></div>
<div class="a" style="left:28px;top:75.40px;width:638px;height:1px;background:#e2e2e2"></div>
<div class="a s ftr" style="left:30.7px;top:59.05px;font-size:10.1px;letter-spacing:-.103px;line-height:12px;color:#111">rkisp_ov4689_CWF_2688_1520_10bpp_1.3x_0.020s_lcg_normL_single_100602251</div>
<div class="a" style="left:0;top:76.50px;width:27.6px;height:23.00px;background:#e4e4e4;border:1px solid #d0d0d0"></div>
<div class="a" style="left:28px;top:99.80px;width:638px;height:1px;background:#e2e2e2"></div>
<div class="a s ftr" style="left:30.7px;top:83.50px;font-size:10.1px;letter-spacing:-.103px;line-height:12px;color:#111">rkisp_ov4689_D50_2688_1520_10bpp_1.1x_0.020s_lcg_normL_single_1007469</div>
<div class="a" style="left:0;top:100.90px;width:27.6px;height:23.30px;background:#e4e4e4;border:1px solid #d0d0d0"></div>
<div class="a" style="left:28px;top:124.50px;width:638px;height:1px;background:#e2e2e2"></div>
<div class="a s ftr" style="left:30.7px;top:108.05px;font-size:10.1px;letter-spacing:-.103px;line-height:12px;color:#111">rkisp_ov4689_D65_2688_1520_10bpp_1.3x_0.020s_lcg_normL_single_100814708</div>
<div class="a" style="left:0;top:125.60px;width:27.6px;height:23.20px;background:#e4e4e4;border:1px solid #d0d0d0"></div>
<div class="a" style="left:28px;top:149.10px;width:638px;height:1px;background:#e2e2e2"></div>
<div class="a s ftr" style="left:30.7px;top:132.70px;font-size:10.1px;letter-spacing:-.103px;line-height:12px;color:#111">rkisp_ov4689_D75_2688_1520_10bpp_1.1x_0.020s_lcg_normL_single_100904702</div>
 <div class="a" style="left:666px;top:0;width:13px;height:136.2px;background:#f0f0f0"></div>
 <div class="a" style="left:666px;top:14px;width:13px;height:61.4px;background:#cdcdcd"></div>
 <svg class="a" style="left:668.6px;top:4.6px" width="8" height="5" viewBox="0 0 8 5"><path d="M.8 4.2L4 1L7.2 4.2" fill="none" stroke="#505050" stroke-width="1.2"/></svg>
 <svg class="a" style="left:668.6px;top:127.5px" width="8" height="5" viewBox="0 0 8 5"><path d="M.8 .8L4 4L7.2 .8" fill="none" stroke="#505050" stroke-width="1.2"/></svg>
</div>

</body></html>
